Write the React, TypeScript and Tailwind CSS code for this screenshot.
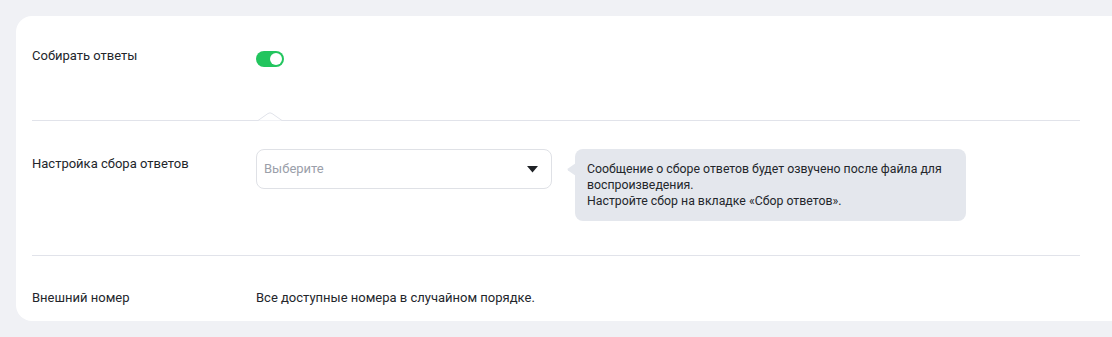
export default function App() {
  return (
    <div className="min-h-[337px] bg-[#f0f1f5] pl-4 pt-4 pb-4 font-['Roboto',sans-serif] text-[#23262b]">
      <div className="rounded-l-2xl bg-white pl-4 pr-8">
        {/* collect answers */}
        <div className="flex h-[104px] items-start pt-[30px]">
          <div className="w-[224px] text-[13px] leading-5">Собирать ответы</div>
          <div className="mt-[5px] flex h-4 w-[28px] items-center justify-end rounded-full bg-[#22c55e] pr-[2px]">
            <div className="h-3 w-3 rounded-full bg-white" />
          </div>
        </div>

        {/* divider with notch */}
        <div className="relative h-px bg-[#e1e3ea]">
          <svg className="absolute left-[226px] top-[-8px]" width="24" height="9" viewBox="0 0 24 9">
            <path d="M0 8.5 L10 1.5 Q12 0.2 14 1.5 L24 8.5" fill="white" stroke="#e1e3ea" strokeWidth="1" />
          </svg>
        </div>

        {/* settings */}
        <div className="flex items-start pt-[28px] pb-[34px]">
          <div className="w-[224px] pt-[5px] text-[13px] leading-5">Настройка сбора ответов</div>
          <div className="flex h-[40px] w-[296px] items-center justify-between rounded-lg border border-[#dfe1e6] pl-[7px] pr-[13px]">
            <span className="text-[13px] text-[#9ba0aa]">Выберите</span>
            <svg width="11" height="7" viewBox="0 0 11 7">
              <path d="M0 0 H11 L5.5 6.5 Z" fill="#1f2226" />
            </svg>
          </div>
          <div className="relative ml-[23px] w-[391px] rounded-lg bg-[#e4e7ed] px-3 py-3 text-[12.3px] leading-4">
            <svg className="absolute left-[-8px] top-[14px]" width="9" height="13" viewBox="0 0 9 13">
              <path d="M9 0 L1 5.5 Q0 6.5 1 7.5 L9 13 Z" fill="#e4e7ed" />
            </svg>
            <p>Сообщение о сборе ответов будет озвучено после файла для воспроизведения.</p>
            <p>Настройте сбор на вкладке «Сбор ответов».</p>
          </div>
        </div>

        <div className="h-px bg-[#e1e3ea]" />

        {/* external number */}
        <div className="flex items-center pt-8 pb-[13px]">
          <div className="w-[224px] text-[13px] leading-5">Внешний номер</div>
          <div className="text-[13px] leading-5">Все доступные номера в случайном порядке.</div>
        </div>
      </div>
    </div>
  );
}
